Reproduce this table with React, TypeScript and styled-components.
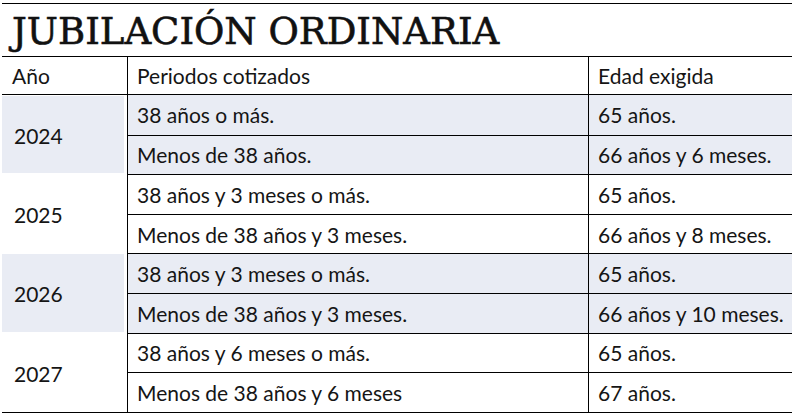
import * as React from 'react';
import styled, {createGlobalStyle} from "styled-components";

const GlobalStyle = createGlobalStyle`
  html, body {
    margin: 0;
    padding: 0;
    background: #ffffff;
  }
`

const Page = styled.div`
  width: 792px;
  height: 415px;
  padding: 3px 0 0 2px;
  box-sizing: border-box;
  color: #151515;
  font-family: Lato, "Noto Sans", sans-serif;
  font-size: 21px;
  overflow: hidden;
`

const Title = styled.h1`
  margin: 0;
  height: 54px;
  box-sizing: border-box;
  border-top: 1.5px solid #000;
  border-bottom: 1.5px solid #000;
  padding: 6px 0 0 10px;
  font-family: "DejaVu Serif", "Liberation Serif", serif;
  font-weight: 400;
  font-size: 37px;
  line-height: 44px;
  -webkit-text-stroke: 0.6px #111;
  color: #111;
  white-space: nowrap;
`

const Grid = styled.div`
  display: grid;
  grid-template-columns: 125px 461px 1fr;
  grid-template-rows: 38px;
  grid-auto-rows: 39.6px;
  border-bottom: 1.5px solid #000;
`

const HeadCell = styled.div<{ first?: boolean }>`
  display: flex;
  align-items: center;
  padding-left: ${props => props.first ? '10px' : '9px'};
  border-left: ${props => props.first ? 'none' : '1.5px solid #000'};
  border-bottom: 1.5px solid #000;
`

const YearCell = styled.div`
  grid-row: span 2;
  display: flex;
  padding: 1px 3px 1px 0;
`

const YearShade = styled.div<{ shaded: boolean }>`
  flex: 1;
  display: flex;
  align-items: center;
  padding-left: 12px;
  padding-top: 2px;
  background: ${props => props.shaded ? '#e9ecf4' : 'transparent'};
`

const Cell = styled.div<{ shaded: boolean; topLine: boolean }>`
  display: flex;
  align-items: center;
  padding-left: 9px;
  border-left: 1.5px solid #000;
  border-top: ${props => props.topLine ? '1.5px solid #000' : 'none'};
  background: ${props => props.shaded ? '#e9ecf4' : 'transparent'};
  white-space: nowrap;
`

const groups = [
    {year: '2024', rows: [['38 años o más.', '65 años.'], ['Menos de 38 años.', '66 años y 6 meses.']]},
    {year: '2025', rows: [['38 años y 3 meses o más.', '65 años.'], ['Menos de 38 años y 3 meses.', '66 años y 8 meses.']]},
    {year: '2026', rows: [['38 años y 3 meses o más.', '65 años.'], ['Menos de 38 años y 3 meses.', '66 años y 10 meses.']]},
    {year: '2027', rows: [['38 años y 6 meses o más.', '65 años.'], ['Menos de 38 años y 6 meses', '67 años.']]},
];

export default function App() {
    return (
        <Page>
            <GlobalStyle/>
            <Title>JUBILACIÓN ORDINARIA</Title>
            <Grid>
                <HeadCell first>Año</HeadCell>
                <HeadCell>Periodos cotizados</HeadCell>
                <HeadCell>Edad exigida</HeadCell>
                {groups.map((group, gi) => {
                    const shaded = gi % 2 === 0;
                    return (
                        <React.Fragment key={group.year}>
                            <YearCell>
                                <YearShade shaded={shaded}>{group.year}</YearShade>
                            </YearCell>
                            {group.rows.map((row, ri) => (
                                <React.Fragment key={ri}>
                                    <Cell shaded={shaded} topLine={gi > 0 || ri > 0}>{row[0]}</Cell>
                                    <Cell shaded={shaded} topLine={gi > 0 || ri > 0}>{row[1]}</Cell>
                                </React.Fragment>
                            ))}
                        </React.Fragment>
                    );
                })}
            </Grid>
        </Page>
    );
}
